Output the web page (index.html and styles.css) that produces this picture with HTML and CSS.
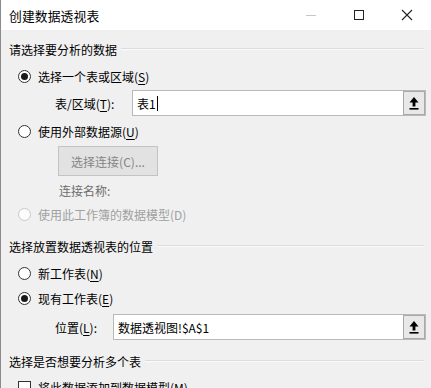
FILE: index.html
```html
<!DOCTYPE html>
<html lang="zh-CN">
<head>
<meta charset="utf-8">
<title>创建数据透视表</title>
<link rel="stylesheet" href="styles.css">
</head>
<body>
<div class="window">
  <div class="titlebar">
    <div class="title">创建数据透视表</div>
    <div class="controls">
      <div class="ctrl"><span class="min"></span></div>
      <div class="ctrl"><span class="max"></span></div>
      <div class="ctrl">
        <svg width="12" height="12" viewBox="0 0 12 12"><path d="M1 1 L11 11 M11 1 L1 11" stroke="#222" stroke-width="1.1" fill="none"/></svg>
      </div>
    </div>
  </div>
  <div class="content">
    <div class="group-head h1"><span>请选择要分析的数据</span><i class="rule"></i></div>
    <div class="radio-row r1"><span class="radio on"></span><span>选择一个表或区域(<u>S</u>)</span></div>
    <div class="field-row fT">
      <span class="label lT">表/区域(<u>T</u>):</span>
      <div class="input inT"><span class="val">表1<span class="caret"></span></span>
        <span class="pick"><svg width="10" height="14" viewBox="0 0 10 14"><path d="M5 1 L0.5 6.5 H3.6 V10.5 H6.4 V6.5 H9.5 Z" fill="#000"/><rect x="0.5" y="12" width="9" height="1.6" fill="#000"/></svg></span>
      </div>
    </div>
    <div class="radio-row r2"><span class="radio"></span><span>使用外部数据源(<u>U</u>)</span></div>
    <div class="btn-row"><div class="btn">选择连接(C)...</div></div>
    <div class="conn">连接名称:</div>
    <div class="radio-row rD disabled"><span class="radio"></span><span>使用此工作簿的数据模型(D)</span></div>
    <div class="group-head h2"><span>选择放置数据透视表的位置</span><i class="rule"></i></div>
    <div class="radio-row rN"><span class="radio"></span><span>新工作表(<u>N</u>)</span></div>
    <div class="radio-row rE"><span class="radio on"></span><span>现有工作表(<u>E</u>)</span></div>
    <div class="field-row fL">
      <span class="label lL">位置(<u>L</u>):</span>
      <div class="input inL"><span class="val">数据透视图!$A$1</span>
        <span class="pick"><svg width="10" height="14" viewBox="0 0 10 14"><path d="M5 1 L0.5 6.5 H3.6 V10.5 H6.4 V6.5 H9.5 Z" fill="#000"/><rect x="0.5" y="12" width="9" height="1.6" fill="#000"/></svg></span>
      </div>
    </div>
    <div class="group-head h3"><span>选择是否想要分析多个表</span><i class="rule"></i></div>
    <div class="radio-row rM"><span class="check"></span><span>将此数据添加到数据模型(<u>M</u>)</span></div>
  </div>
</div>
</body>
</html>
```

FILE: styles.css
```css
* { box-sizing: border-box; }
html, body { margin: 0; padding: 0; }
body {
  width: 431px;
  height: 388px;
  overflow: hidden;
  font-family: "Microsoft YaHei", "Noto Sans CJK SC", "Noto Sans", sans-serif;
  font-size: 12px;
  color: #000;
  background: #f0f0f0;
}
.window {
  height: 388px;
  border-left: 1px solid #8c8c8c;
  background: #f0f0f0;
  display: flex;
  flex-direction: column;
}
.titlebar {
  height: 30px;
  background: #fff;
  display: flex;
  align-items: center;
  flex: none;
}
.title {
  padding-left: 8px;
  font-size: 12.8px;
  flex: 1;
  letter-spacing: 0.1px;
}
.controls { display: flex; height: 30px; }
.ctrl {
  width: 48px;
  height: 30px;
  display: flex;
  align-items: center;
  justify-content: center;
}
.min { width: 10px; height: 1px; background: #c6c6c6; }
.max { width: 10px; height: 10px; border: 1px solid #222; }

.content {
  padding: 0 5px 0 8px;
  display: flex;
  flex-direction: column;
}
.group-head {
  height: 22px;
  display: flex;
  align-items: center;
}
.group-head .rule {
  flex: 1;
  height: 2px;
  margin-left: 4px;
  margin-right: 2px;
  border-top: 1px solid #dcdcdc;
  border-bottom: 1px solid #fbfbfb;
}
.h1 { margin-top: 8px; }
.h2 { margin-top: 10px; }
.h3 { margin-top: 10px; }

.radio-row {
  height: 22px;
  display: flex;
  align-items: center;
  padding-left: 9px;
  gap: 7px;
}
.radio {
  width: 13px;
  height: 13px;
  border-radius: 50%;
  border: 1px solid #333;
  background: #fff;
  position: relative;
  flex: none;
}
.radio.on::after {
  content: "";
  position: absolute;
  left: 2px; top: 2px;
  width: 7px; height: 7px;
  border-radius: 50%;
  background: #1a1a1a;
}
.check {
  width: 13px;
  height: 13px;
  border: 1px solid #333;
  background: #fff;
  flex: none;
}
.disabled { color: #a0a0a0; }
.disabled .radio { border-color: #c8c8c8; background: #fcfcfc; }
u { text-underline-offset: 2px; }

.r1 { margin-top: 5px; }
.r2 { margin-top: 4px; }
.rD { margin-top: 2px; }
.rN { margin-top: 5px; }
.rE { margin-top: 3px; }
.rM { margin-top: 4px; }

.field-row {
  height: 26px;
  display: flex;
  align-items: center;
}
.fT { margin-top: 3px; }
.fL { margin-top: 5px; }
.label { padding-left: 46px; }
.lT { width: 123px; }
.lL { width: 104px; }
.input {
  flex: 1;
  height: 26px;
  background: #fff;
  border: 1px solid #b9b9b9;
  display: flex;
  align-items: center;
  padding-left: 4px;
}
.input .val { flex: 1; display: flex; align-items: center; }
.caret {
  display: inline-block;
  width: 1px;
  height: 15px;
  background: #000;
  margin-left: 1px;
}
.pick {
  width: 22px;
  height: 24px;
  border: 1px solid #a9a9a9;
  background: #e8e8e8;
  display: flex;
  align-items: center;
  justify-content: center;
  flex: none;
}

.btn-row {
  margin-top: 4px;
  padding-left: 49px;
  display: flex;
}
.btn {
  width: 100px;
  height: 30px;
  border: 1px solid #c3c3c3;
  background: #e2e2e2;
  color: #858585;
  display: flex;
  align-items: center;
  justify-content: center;
}
.conn {
  margin-top: 5px;
  height: 20px;
  line-height: 20px;
  padding-left: 50px;
  color: #6d6d6d;
}
```
